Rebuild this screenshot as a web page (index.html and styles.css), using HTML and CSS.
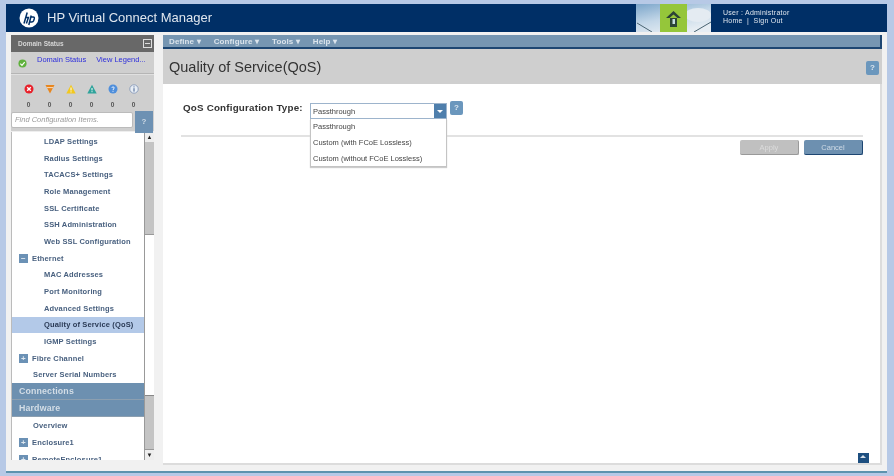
FILE: index.html
```html
<!DOCTYPE html>
<html lang="en">
<head>
    <meta charset="UTF-8" />
    <title>HP Virtual Connect Manager</title>
    <link rel="stylesheet" href="styles.css">
</head>
<body>
    <div class="app">
        <header class="top-bar">
            <svg class="hp-logo" viewBox="0 0 20 20" aria-hidden="true">
                <circle cx="10" cy="10" r="9.5" fill="#fff"/>
                <path d="M8.2 4.5 5 15.5M7 9.5h2.4L7.4 15.5M12.2 7.5 9.8 17M12 9h2.2c1.2 0 1.3 1 1 2l-.6 1.8c-.3.8-1 1.2-1.8 1.2h-1.6" fill="none" stroke="#002f66" stroke-width="1.5"/>
            </svg>
            <div class="app-title">HP Virtual Connect Manager</div>
            <svg class="banner" viewBox="0 0 75 28" aria-hidden="true">
                <defs>
                    <linearGradient id="sky" x1="0" y1="0" x2="0.6" y2="1">
                        <stop offset="0" stop-color="#7ba5ca"/>
                        <stop offset="0.55" stop-color="#c3d7e8"/>
                        <stop offset="1" stop-color="#e6edf3"/>
                    </linearGradient>
                </defs>
                <rect width="75" height="28" fill="url(#sky)"/>
                <ellipse cx="62" cy="11" rx="13" ry="7" fill="#e4ebf2"/>
                <path d="M1 19 16 28M75 18 58 28" fill="none" stroke="#4a6472" stroke-width="1"/>
                <rect x="24" width="27" height="28" fill="#95c63a"/>
                <path d="M37.500 7 30 14h3.500l4-3.500 4 3.500h3.500z" fill="#2c4436"/>
                <path d="M34 14h7v9h-7z" fill="#2c4436"/>
                <path d="M36.500 15h2.500v5h-2.500z" fill="#c4dce0"/>
            </svg>
            <div class="user-box">
                <div>User : Administrator</div>
                <div>Home &nbsp;|&nbsp; Sign Out</div>
            </div>
        </header>

        <div class="content">
            <aside class="sidebar">
                <div class="status-head">
                    <span>Domain Status</span>
                    <span class="collapse-box"></span>
                </div>
                <div class="status-links">
                    <svg class="ok-icon" viewBox="0 0 10 10" aria-hidden="true">
                        <circle cx="5" cy="5" r="4.5" fill="#5fb13c"/>
                        <path d="M2.6 5.2 4.4 7l3-3.6" fill="none" stroke="#fff" stroke-width="1.3"/>
                    </svg>
                    <span class="status-link">Domain Status</span>
                    <span class="status-link">View Legend...</span>
                </div>
                <div class="alert-grid">
                    <div class="alert">
                        <svg viewBox="0 0 10 10"><circle cx="5" cy="5" r="4.5" fill="#e8202a"/><path d="M3.2 3.2 6.8 6.8M6.8 3.2 3.2 6.8" stroke="#fff" stroke-width="1.4"/></svg>
                        <span>0</span>
                    </div>
                    <div class="alert">
                        <svg viewBox="0 0 10 10"><path d="M.5 1h9L5 9.5z" fill="#e8861e"/><path d="M2 3.6h6" stroke="#fff" stroke-width=".7"/></svg>
                        <span>0</span>
                    </div>
                    <div class="alert">
                        <svg viewBox="0 0 10 10"><path d="M5 .8 9.7 9.4H.3z" fill="#f2c81e"/><path d="M5 3.5v3M5 7.4v1" stroke="#fff" stroke-width="1"/></svg>
                        <span>0</span>
                    </div>
                    <div class="alert">
                        <svg viewBox="0 0 10 10"><path d="M5 .8 9.7 9.4H.3z" fill="#2fa39b"/><path d="M5 4v2.400M5 7.200v1" stroke="#fff" stroke-width="1"/></svg>
                        <span>0</span>
                    </div>
                    <div class="alert">
                        <svg viewBox="0 0 10 10"><circle cx="5" cy="5" r="4.5" fill="#4f8fdc"/><path d="M3.8 3.8C4 2.600 6.200 2.600 6.200 3.900 6.200 4.800 5 4.900 5 6M5 6.800v1" fill="none" stroke="#fff" stroke-width=".9"/></svg>
                        <span>0</span>
                    </div>
                    <div class="alert">
                        <svg viewBox="0 0 10 10"><circle cx="5" cy="5" r="4.200" fill="#e8eef5" stroke="#7f93b5" stroke-width=".8"/><path d="M5 4.200v3.400M5 2.400v1" stroke="#45618f" stroke-width="1"/></svg>
                        <span>0</span>
                    </div>
                </div>
                <div class="search-row">
                    <div class="search-input">Find Configuration Items.</div>
                    <div class="search-help">?</div>
                </div>
                <div class="tree-wrap">
                    <div class="tree">
                        <div class="row sub">LDAP Settings</div>
                        <div class="row sub">Radius Settings</div>
                        <div class="row sub">TACACS+ Settings</div>
                        <div class="row sub">Role Management</div>
                        <div class="row sub">SSL Certificate</div>
                        <div class="row sub">SSH Administration</div>
                        <div class="row sub">Web SSL Configuration</div>
                        <div class="row group"><span class="toggle">&minus;</span>Ethernet</div>
                        <div class="row sub">MAC Addresses</div>
                        <div class="row sub">Port Monitoring</div>
                        <div class="row sub">Advanced Settings</div>
                        <div class="row sub selected">Quality of Service (QoS)</div>
                        <div class="row sub">IGMP Settings</div>
                        <div class="row group"><span class="toggle">+</span>Fibre Channel</div>
                        <div class="row plain">Server Serial Numbers</div>
                        <div class="section">Connections</div>
                        <div class="section">Hardware</div>
                        <div class="row plain">Overview</div>
                        <div class="row group"><span class="toggle">+</span>Enclosure1</div>
                        <div class="row group"><span class="toggle">+</span>RemoteEnclosure1</div>
                    </div>
                    <div class="scrollbar">
                        <div class="arrow">&#9650;</div>
                        <div class="thumb top"></div>
                        <div class="track"></div>
                        <div class="thumb bottom"></div>
                        <div class="arrow">&#9660;</div>
                    </div>
                </div>
            </aside>

            <main class="main">
                <nav class="menu-bar">
                    <span>Define &#9662;</span>
                    <span>Configure &#9662;</span>
                    <span>Tools &#9662;</span>
                    <span>Help &#9662;</span>
                </nav>
                <div class="title-bar">
                    <h1>Quality of Service(QoS)</h1>
                    <div class="help-btn large">?</div>
                </div>
                <div class="panel">
                    <div class="form-row">
                        <label>QoS Configuration Type:</label>
                        <div class="select-wrap">
                            <div class="select">
                                <span>Passthrough</span>
                                <span class="select-btn"></span>
                            </div>
                            <ul class="options">
                                <li>Passthrough</li>
                                <li>Custom (with FCoE Lossless)</li>
                                <li>Custom (without FCoE Lossless)</li>
                            </ul>
                        </div>
                        <div class="help-btn">?</div>
                    </div>
                    <div class="divider"></div>
                    <div class="actions">
                        <button class="btn disabled">Apply</button>
                        <button class="btn">Cancel</button>
                    </div>
                    <div class="spacer"></div>
                    <div class="panel-foot"><span class="scroll-top"></span></div>
                </div>
            </main>
        </div>
    </div>
</body>
</html>
```

FILE: styles.css
```css
* {
    margin: 0;
    padding: 0;
    box-sizing: border-box;
}

html, body {
    height: 100%;
    overflow: hidden;
}

body {
    background: #b7c9e6;
    padding: 4px 7px 3px 6px;
    font-family: "Liberation Sans", Arial, sans-serif;
}

.app {
    height: 469px;
    display: flex;
    flex-direction: column;
    background: #f1f1f1;
    border-bottom: 2px solid #5d93ae;
    filter: blur(0.55px);
}

/* top bar */
.top-bar {
    height: 28px;
    flex-shrink: 0;
    display: flex;
    align-items: center;
    background: #002f66;
    color: #dfe6ee;
    padding-left: 13px;
}

.hp-logo {
    width: 20px;
    height: 20px;
}

.app-title {
    margin: -2px 0 0 8px;
    font-size: 13px;
    flex: 1;
}

.banner {
    width: 75px;
    height: 28px;
    margin-right: 12px;
}

.user-box {
    width: 164px;
    font-size: 7px;
    line-height: 8px;
    letter-spacing: 0.25px;
    margin-top: -3px;
}

/* page under the top bar */
.content {
    flex: 1;
    min-height: 0;
    display: flex;
    padding: 3px 5px 0 5px;
    gap: 9px;
}

.sidebar {
    width: 143px;
    flex-shrink: 0;
    display: flex;
    flex-direction: column;
    background: #cfcfcf;
    margin-bottom: 11px;
}

.status-head {
    height: 17px;
    flex-shrink: 0;
    display: flex;
    align-items: center;
    justify-content: space-between;
    padding: 0 2px 0 7px;
    background: #686868;
    color: #d6d6d6;
    font-size: 6.5px;
    font-weight: bold;
}

.collapse-box {
    width: 9px;
    height: 9px;
    border: 1px solid #ddd;
    position: relative;
}

.collapse-box::after {
    content: "";
    position: absolute;
    left: 1px;
    right: 1px;
    top: 3px;
    height: 1px;
    background: #ddd;
}

.status-links {
    height: 22px;
    flex-shrink: 0;
    display: flex;
    align-items: flex-start;
    padding: 3px 0 0 7px;
    border-bottom: 1px solid #b5b5b5;
    font-size: 7.5px;
}

.ok-icon {
    width: 9px;
    height: 9px;
    flex-shrink: 0;
    margin: 4px 10px 0 0;
}

.status-link {
    color: #2d2ddc;
    margin-right: 10px;
    white-space: nowrap;
}

.status-link:last-child {
    margin-right: 0;
}

.alert-grid {
    height: 37px;
    flex-shrink: 0;
    display: flex;
    padding: 9px 0 0 7px;
    border-top: 1px solid #e0e0e0;
}

.alert {
    width: 21px;
    display: flex;
    flex-direction: column;
    align-items: center;
    font-size: 6.5px;
    font-weight: bold;
    color: #555;
    gap: 7px;
}

.alert svg {
    width: 10px;
    height: 10px;
}

.search-row {
    height: 20px;
    flex-shrink: 0;
    display: flex;
}

.search-input {
    width: 122px;
    height: 16px;
    margin-top: 1px;
    background: #fff;
    border: 1px solid #bbb;
    border-radius: 2px;
    font-size: 7.5px;
    font-style: italic;
    color: #9a9a9a;
    line-height: 14px;
    padding-left: 3px;
    white-space: nowrap;
    overflow: hidden;
}

.search-help {
    position: relative;
    z-index: 1;
    margin-left: 2px;
    width: 18px;
    height: 22px;
    background: #6d91b3;
    color: #cfdbe6;
    font-size: 8px;
    font-weight: bold;
    text-align: center;
    line-height: 22px;
}

.tree-wrap {
    flex: 1;
    min-height: 0;
    display: flex;
    border-top: 1px solid #eee;
}

.tree {
    flex: 1;
    min-width: 0;
    background: #fff;
    overflow: hidden;
    border-left: 1px solid #bbb;
    font-size: 7.5px;
    font-weight: bold;
    color: #48607f;
    letter-spacing: 0.15px;
    padding-top: 1px;
}

.row {
    height: 16.7px;
    display: flex;
    align-items: center;
    white-space: nowrap;
}

.sub {
    padding-left: 32px;
}

.plain {
    padding-left: 21px;
}

.group {
    padding-left: 7px;
}

.selected {
    background: #b3c9e8;
    color: #2a3a55;
}

.toggle {
    width: 9px;
    height: 9px;
    margin-right: 4px;
    background: #6b91b5;
    color: #dfe8f0;
    font-size: 8px;
    line-height: 9px;
    text-align: center;
}

.section {
    height: 17px;
    background: #6d90b0;
    border-bottom: 1px solid #8c9fb0;
    color: #d3dde6;
    font-size: 8.8px;
    line-height: 16px;
    padding-left: 7px;
}

.scrollbar {
    width: 10px;
    flex-shrink: 0;
    display: flex;
    flex-direction: column;
    background: #f4f4f4;
    border-left: 1px solid #999;
}

.arrow {
    height: 10px;
    flex-shrink: 0;
    font-size: 6px;
    line-height: 10px;
    text-align: center;
    color: #222;
    background: #eee;
}

.thumb {
    background: #c4c4c4;
    border-bottom: 1px solid #999;
}

.thumb.top {
    height: 93px;
    flex-shrink: 0;
}

.track {
    height: 160px;
    flex-shrink: 0;
    background: #fff;
}

.thumb.bottom {
    flex: 1;
    border-top: 1px solid #888;
}

/* main area */
.main {
    flex: 1;
    min-width: 0;
    display: flex;
    flex-direction: column;
    background: #cfcfcf;
    margin-bottom: 6px;
}

.menu-bar {
    height: 14px;
    flex-shrink: 0;
    display: flex;
    gap: 13px;
    align-items: center;
    padding-left: 6px;
    background: #7696b2;
    border-bottom: 2px solid #1d4672;
    border-right: 2px solid #1d4672;
    color: #dbe4ec;
    font-size: 8px;
    letter-spacing: 0.12px;
    font-weight: bold;
}

.title-bar {
    height: 35px;
    flex-shrink: 0;
    display: flex;
    align-items: center;
    justify-content: space-between;
    padding: 0 3px 0 6px;
}

.title-bar h1 {
    font-size: 14.5px;
    font-weight: normal;
    color: #333;
}

.help-btn {
    width: 13px;
    height: 14px;
    flex-shrink: 0;
    background: #6b97bd;
    border-radius: 2px;
    color: #dce6ef;
    font-size: 8px;
    font-weight: bold;
    text-align: center;
    line-height: 14px;
}

.help-btn.large {
    margin-top: 3px;
}

.panel {
    flex: 1;
    min-height: 0;
    display: flex;
    flex-direction: column;
    background: #fff;
    padding-top: 19px;
    border-bottom: 2px solid #dcdcdc;
    border-right: 2px solid #dcdcdc;
}

.form-row {
    height: 16px;
    display: flex;
    align-items: flex-start;
    padding-left: 20px;
}

.form-row label {
    width: 127px;
    font-size: 9.8px;
    line-height: 10px;
    font-weight: bold;
    color: #333;
    letter-spacing: 0.2px;
    white-space: nowrap;
}

.select-wrap {
    position: relative;
    width: 137px;
}

.select {
    height: 16px;
    display: flex;
    align-items: center;
    justify-content: space-between;
    background: #fff;
    border: 1px solid #9db4cc;
    font-size: 7.5px;
    color: #444;
    padding-left: 2px;
}

.select-btn {
    width: 12px;
    height: 14px;
    background: #4f7fac;
    position: relative;
}

.select-btn::after {
    content: "";
    position: absolute;
    left: 3px;
    top: 6px;
    border: 3px solid transparent;
    border-top-color: #fff;
}

.options {
    position: absolute;
    top: 16px;
    left: 0;
    right: 0;
    list-style: none;
    background: #fff;
    border: 1px solid #c4c4c4;
    border-top: none;
    font-size: 7.5px;
    color: #444;
    box-shadow: 0 1px 1px #ccc;
    z-index: 5;
}

.options li {
    height: 15.8px;
    line-height: 15.8px;
    padding-left: 2px;
    white-space: nowrap;
}

.form-row .help-btn {
    margin: -2px 0 0 3px;
}

.divider {
    height: 2px;
    margin: 16px 17px 0 18px;
    background: #e2e2e2;
}

.actions {
    display: flex;
    justify-content: flex-end;
    gap: 5px;
    margin: 3px 17px 0 0;
}

.btn {
    width: 59px;
    height: 15px;
    background: #6d90b0;
    border: none;
    border-right: 1px solid #1d4672;
    border-bottom: 1px solid #1d4672;
    border-radius: 2px;
    color: #cfdbe6;
    font-family: inherit;
    font-size: 7.5px;
}

.btn.disabled {
    background: #c0c0c0;
    border-color: #999;
    color: #dcdcdc;
}

.spacer {
    flex: 1;
}

.panel-foot {
    height: 10px;
    display: flex;
    justify-content: flex-end;
    padding-right: 11px;
}

.scroll-top {
    width: 11px;
    height: 10px;
    background: #1d4f80;
    position: relative;
}

.scroll-top::after {
    content: "";
    position: absolute;
    left: 2px;
    top: -1px;
    border: 3.5px solid transparent;
    border-bottom-color: #d6e0ea;
}
```
